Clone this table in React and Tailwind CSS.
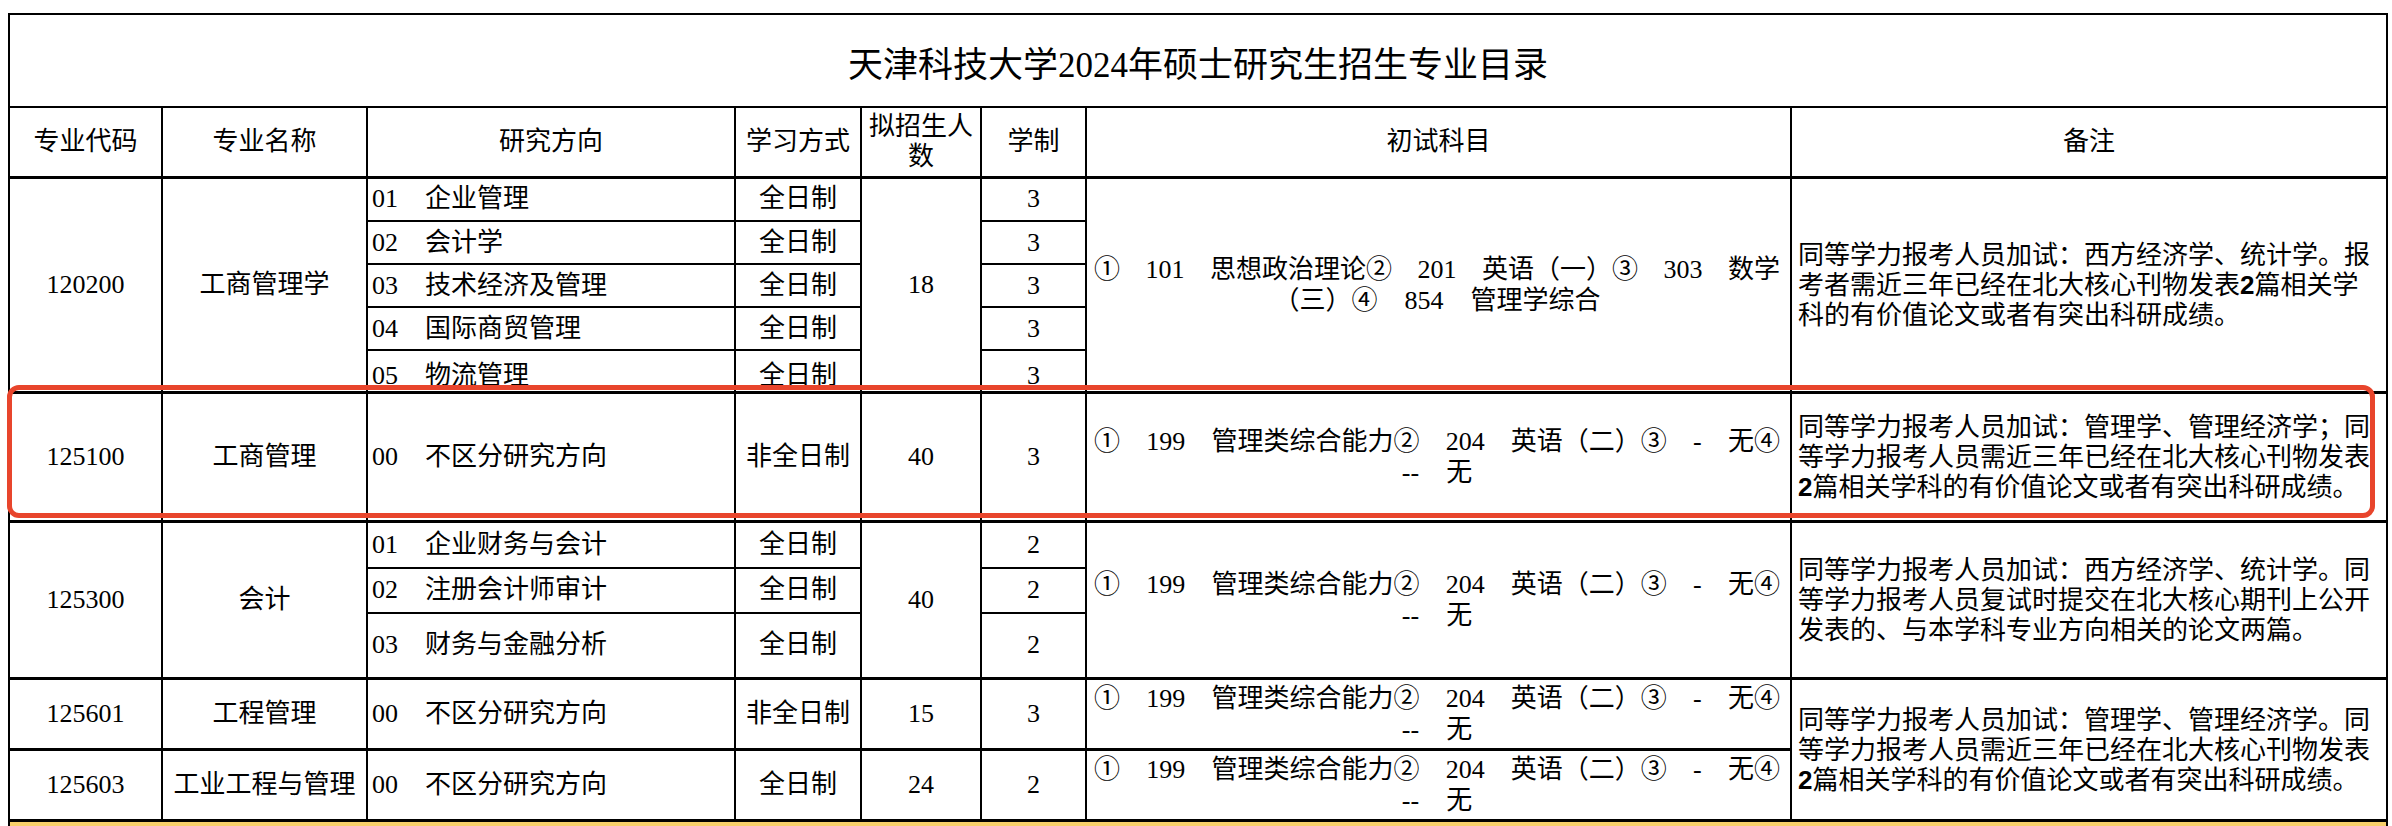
import React from "react";

const B = "border-2 border-black p-0 text-center align-middle";
const MT = " border-t-[3px]";

function Dir({ code, name, clip }) {
  const inner = (
    <div className="flex items-center whitespace-nowrap pl-[4px]">
      <span>{code}</span>
      <span className="ml-[27px]">{name}</span>
    </div>
  );
  if (clip) {
    return (
      <div className="h-[40px] overflow-hidden">
        <div className="pt-[10px]">{inner}</div>
      </div>
    );
  }
  return inner;
}

function Clip({ children }) {
  return (
    <div className="h-[40px] overflow-hidden">
      <div className="pt-[10px]">{children}</div>
    </div>
  );
}

function Exam({ first, second }) {
  return (
    <div className="pl-[7px] pr-[10px] leading-[31px]">
      <div className="flex justify-between whitespace-nowrap">
        {first.map((p, i) => (
          <span key={i}>{p}</span>
        ))}
      </div>
      <div className="flex justify-center gap-[27px] whitespace-nowrap">
        {second.map((p, i) => (
          <span key={i}>{p}</span>
        ))}
      </div>
    </div>
  );
}

function Remark({ lines }) {
  return (
    <div className="pl-[6px] text-left font-['Liberation_Sans','Noto_Sans_CJK_SC',sans-serif] leading-[30px]">
      {lines.map((l, i) => (
        <div key={i} className="whitespace-nowrap">
          {l}
        </div>
      ))}
    </div>
  );
}

const E199 = {
  first: ["①", "199", "管理类综合能力②", "204", "英语（二）③", "-", "无④"],
  second: ["--", "无"],
};

export default function App() {
  return (
    <div className="relative w-[2392px] h-[826px] overflow-hidden bg-white text-black">
      <div className="pl-[8px] pt-[13px]">
        <table className="table-fixed border-collapse w-[2378px] font-['Liberation_Serif','Noto_Sans_CJK_SC',serif] text-[26px] leading-[30px]">
          <colgroup>
            <col className="w-[153px]" />
            <col className="w-[205px]" />
            <col className="w-[368px]" />
            <col className="w-[126px]" />
            <col className="w-[120px]" />
            <col className="w-[105px]" />
            <col className="w-[705px]" />
            <col className="w-[596px]" />
          </colgroup>
          <tbody>
            <tr className="h-[93px]">
              <td colSpan={8} className={B + " pt-[10px] text-[35px] leading-[40px]"}>
                天津科技大学2024年硕士研究生招生专业目录
              </td>
            </tr>
            <tr className="h-[70px]">
              <td className={B + " border-b-[3px]"}>专业代码</td>
              <td className={B + " border-b-[3px]"}>专业名称</td>
              <td className={B + " border-b-[3px]"}>研究方向</td>
              <td className={B + " border-b-[3px]"}>学习方式</td>
              <td className={B + " border-b-[3px]"}>
                拟招生人
                <br />数
              </td>
              <td className={B + " border-b-[3px]"}>学制</td>
              <td className={B + " border-b-[3px]"}>初试科目</td>
              <td className={B + " border-b-[3px]"}>备注</td>
            </tr>

            {/* 120200 */}
            <tr className="h-[44px]">
              <td rowSpan={5} className={B + MT}>120200</td>
              <td rowSpan={5} className={B + MT}>工商管理学</td>
              <td className={B + MT + " text-left"}>
                <Dir code="01" name="企业管理" />
              </td>
              <td className={B + MT}>全日制</td>
              <td rowSpan={5} className={B + MT}>18</td>
              <td className={B + MT}>3</td>
              <td rowSpan={5} className={B + MT}>
                <Exam
                  first={["①", "101", "思想政治理论②", "201", "英语（一）③", "303", "数学"]}
                  second={["（三）④", "854", "管理学综合"]}
                />
              </td>
              <td rowSpan={5} className={B + MT}>
                <Remark
                  lines={[
                    "同等学力报考人员加试：西方经济学、统计学。报",
                    <>
                      考者需近三年已经在北大核心刊物发表<span className="font-bold">2</span>篇相关学
                    </>,
                    "科的有价值论文或者有突出科研成绩。",
                  ]}
                />
              </td>
            </tr>
            <tr className="h-[43px]">
              <td className={B + " text-left"}>
                <Dir code="02" name="会计学" />
              </td>
              <td className={B}>全日制</td>
              <td className={B}>3</td>
            </tr>
            <tr className="h-[43px]">
              <td className={B + " text-left"}>
                <Dir code="03" name="技术经济及管理" />
              </td>
              <td className={B}>全日制</td>
              <td className={B}>3</td>
            </tr>
            <tr className="h-[43px]">
              <td className={B + " text-left"}>
                <Dir code="04" name="国际商贸管理" />
              </td>
              <td className={B}>全日制</td>
              <td className={B}>3</td>
            </tr>
            <tr className="h-[42px]">
              <td className={B + " text-left"}>
                <Dir code="05" name="物流管理" clip />
              </td>
              <td className={B}>
                <Clip>全日制</Clip>
              </td>
              <td className={B}>
                <Clip>3</Clip>
              </td>
            </tr>

            {/* 125100 */}
            <tr className="h-[129px]">
              <td className={B + MT}>125100</td>
              <td className={B + MT}>工商管理</td>
              <td className={B + MT + " text-left"}>
                <Dir code="00" name="不区分研究方向" />
              </td>
              <td className={B + MT}>非全日制</td>
              <td className={B + MT}>40</td>
              <td className={B + MT}>3</td>
              <td className={B + MT}>
                <Exam {...E199} />
              </td>
              <td className={B + MT}>
                <Remark
                  lines={[
                    "同等学力报考人员加试：管理学、管理经济学；同",
                    "等学力报考人员需近三年已经在北大核心刊物发表",
                    <>
                      <span className="font-bold">2</span>篇相关学科的有价值论文或者有突出科研成绩。
                    </>,
                  ]}
                />
              </td>
            </tr>

            {/* 125300 */}
            <tr className="h-[46px]">
              <td rowSpan={3} className={B + MT}>125300</td>
              <td rowSpan={3} className={B + MT}>会计</td>
              <td className={B + MT + " text-left"}>
                <Dir code="01" name="企业财务与会计" />
              </td>
              <td className={B + MT}>全日制</td>
              <td rowSpan={3} className={B + MT}>40</td>
              <td className={B + MT}>2</td>
              <td rowSpan={3} className={B + MT}>
                <Exam {...E199} />
              </td>
              <td rowSpan={3} className={B + MT}>
                <Remark
                  lines={[
                    "同等学力报考人员加试：西方经济学、统计学。同",
                    "等学力报考人员复试时提交在北大核心期刊上公开",
                    "发表的、与本学科专业方向相关的论文两篇。",
                  ]}
                />
              </td>
            </tr>
            <tr className="h-[45px]">
              <td className={B + " text-left"}>
                <Dir code="02" name="注册会计师审计" />
              </td>
              <td className={B}>全日制</td>
              <td className={B}>2</td>
            </tr>
            <tr className="h-[66px]">
              <td className={B + " text-left"}>
                <Dir code="03" name="财务与金融分析" />
              </td>
              <td className={B}>全日制</td>
              <td className={B}>2</td>
            </tr>

            {/* 125601 */}
            <tr className="h-[71px]">
              <td className={B + MT}>125601</td>
              <td className={B + MT}>工程管理</td>
              <td className={B + MT + " text-left"}>
                <Dir code="00" name="不区分研究方向" />
              </td>
              <td className={B + MT}>非全日制</td>
              <td className={B + MT}>15</td>
              <td className={B + MT}>3</td>
              <td className={B + MT}>
                <Exam {...E199} />
              </td>
              <td rowSpan={2} className={B + MT}>
                <Remark
                  lines={[
                    "同等学力报考人员加试：管理学、管理经济学。同",
                    "等学力报考人员需近三年已经在北大核心刊物发表",
                    <>
                      <span className="font-bold">2</span>篇相关学科的有价值论文或者有突出科研成绩。
                    </>,
                  ]}
                />
              </td>
            </tr>

            {/* 125603 */}
            <tr className="h-[71px]">
              <td className={B + MT}>125603</td>
              <td className={B + MT}>工业工程与管理</td>
              <td className={B + MT + " text-left"}>
                <Dir code="00" name="不区分研究方向" />
              </td>
              <td className={B + MT}>全日制</td>
              <td className={B + MT}>24</td>
              <td className={B + MT}>2</td>
              <td className={B + MT}>
                <Exam {...E199} />
              </td>
            </tr>

            <tr className="h-[40px]">
              <td colSpan={8} className="border-2 border-t-[3px] border-black bg-[#f7cf6a] p-0"></td>
            </tr>
          </tbody>
        </table>
      </div>

      <div className="pointer-events-none absolute left-[7px] top-[385px] h-[133px] w-[2368px] rounded-[12px] border-[5px] border-[#e8452c]"></div>
    </div>
  );
}
